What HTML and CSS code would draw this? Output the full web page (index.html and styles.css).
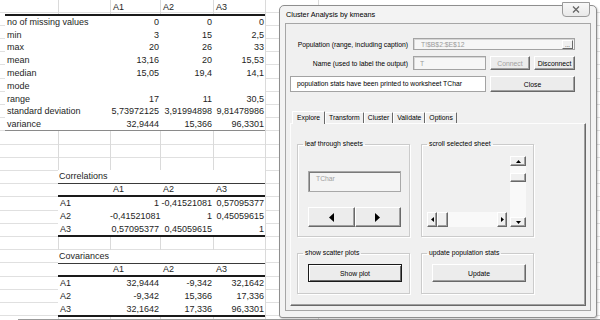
FILE: index.html
```html
<!DOCTYPE html>
<html lang="en">
<head>
    <meta charset="UTF-8">
    <meta name="viewport" content="width=device-width, initial-scale=1.0">
    <title>Cluster Analysis by kmeans</title>
    <link rel="stylesheet" href="styles.css">
</head>
<body>
    <div class="sheet">
        <table class="stats">
            <colgroup>
                <col style="width: 105px">
                <col style="width: 50px">
                <col style="width: 53px">
                <col style="width: 52px">
            </colgroup>
            <thead>
                <tr><th></th><th>A1</th><th>A2</th><th>A3</th></tr>
            </thead>
            <tbody>
                <tr><th>no of missing values</th><td>0</td><td>0</td><td>0</td></tr>
                <tr><th>min</th><td>3</td><td>15</td><td>2,5</td></tr>
                <tr><th>max</th><td>20</td><td>26</td><td>33</td></tr>
                <tr><th>mean</th><td>13,16</td><td>20</td><td>15,53</td></tr>
                <tr><th>median</th><td>15,05</td><td>19,4</td><td>14,1</td></tr>
                <tr><th>mode</th><td></td><td></td><td></td></tr>
                <tr><th>range</th><td>17</td><td>11</td><td>30,5</td></tr>
                <tr><th>standard deviation</th><td>5,73972125</td><td>3,91994898</td><td>9,81478986</td></tr>
                <tr><th>variance</th><td>32,9444</td><td>15,366</td><td>96,3301</td></tr>
            </tbody>
        </table>

        <div class="matrix-block first">
            <div class="matrix-title">Correlations</div>
            <table class="matrix">
                <colgroup>
                    <col style="width: 52px">
                    <col style="width: 50px">
                    <col style="width: 53px">
                    <col style="width: 52px">
                </colgroup>
                <thead>
                    <tr><th></th><th>A1</th><th>A2</th><th>A3</th></tr>
                </thead>
                <tbody>
                    <tr><th>A1</th><td>1</td><td>-0,41521081</td><td>0,57095377</td></tr>
                    <tr><th>A2</th><td>-0,41521081</td><td>1</td><td>0,45059615</td></tr>
                    <tr><th>A3</th><td>0,57095377</td><td>0,45059615</td><td>1</td></tr>
                </tbody>
            </table>
        </div>

        <div class="matrix-block">
            <div class="matrix-title">Covariances</div>
            <table class="matrix">
                <colgroup>
                    <col style="width: 52px">
                    <col style="width: 50px">
                    <col style="width: 53px">
                    <col style="width: 52px">
                </colgroup>
                <thead>
                    <tr><th></th><th>A1</th><th>A2</th><th>A3</th></tr>
                </thead>
                <tbody>
                    <tr><th>A1</th><td>32,9444</td><td>-9,342</td><td>32,1642</td></tr>
                    <tr><th>A2</th><td>-9,342</td><td>15,366</td><td>17,336</td></tr>
                    <tr><th>A3</th><td>32,1642</td><td>17,336</td><td>96,3301</td></tr>
                </tbody>
            </table>
        </div>
        <div class="sheet-edge"></div>

        <div class="dialog">
            <div class="titlebar">
                <span class="title">Cluster Analysis by kmeans</span>
                <button class="close-x" title="Close">
                    <svg width="8" height="7" viewBox="0 0 8 7"><path d="M1 0.5 L7 6.5 M7 0.5 L1 6.5" stroke="#666" stroke-width="1.3" fill="none"/></svg>
                </button>
            </div>
            <div class="client">
                <div class="form">
                    <label class="lbl" for="population">Population (range, including caption)</label>
                    <div class="range">
                        <input type="text" id="population" value="T!$B$2:$E$12" disabled>
                        <button class="browse">...</button>
                    </div>

                    <label class="lbl" for="outName">Name (used to label the output)</label>
                    <input type="text" id="outName" class="field" value="T" disabled>
                    <button class="btn" disabled>Connect</button>
                    <button class="btn">Disconnect</button>

                    <div class="status">population stats have been printed to worksheet TChar</div>
                    <button class="btn close">Close</button>
                </div>

                <div class="tabs">
                    <div class="tab active">Explore</div>
                    <div class="tab">Transform</div>
                    <div class="tab">Cluster</div>
                    <div class="tab">Validate</div>
                    <div class="tab">Options</div>
                </div>
                <div class="tab-pane">
                    <fieldset class="group">
                        <legend>leaf through sheets</legend>
                        <div class="sheet-name">TChar</div>
                        <div class="nav">
                            <button class="btn">
                                <svg width="5" height="9" viewBox="0 0 5 9"><polygon points="5,0 0,4.5 5,9" fill="#000"/></svg>
                            </button>
                            <button class="btn">
                                <svg width="5" height="9" viewBox="0 0 5 9"><polygon points="0,0 5,4.5 0,9" fill="#000"/></svg>
                            </button>
                        </div>
                    </fieldset>

                    <fieldset class="group">
                        <legend>scroll selected sheet</legend>
                        <div class="scroller">
                            <div class="vbar">
                                <div class="sb-btn">
                                    <svg width="5" height="3" viewBox="0 0 5 3"><polygon points="0,3 2.5,0 5,3" fill="#000"/></svg>
                                </div>
                                <div class="sb-track"><div class="sb-thumb"></div></div>
                                <div class="sb-btn">
                                    <svg width="5" height="3" viewBox="0 0 5 3"><polygon points="0,0 2.5,3 5,0" fill="#000"/></svg>
                                </div>
                            </div>
                            <div class="hbar">
                                <div class="sb-btn">
                                    <svg width="3" height="5" viewBox="0 0 3 5"><polygon points="3,0 0,2.5 3,5" fill="#000"/></svg>
                                </div>
                                <div class="sb-track"><div class="sb-thumb"></div></div>
                                <div class="sb-btn">
                                    <svg width="3" height="5" viewBox="0 0 3 5"><polygon points="0,0 3,2.5 0,5" fill="#000"/></svg>
                                </div>
                            </div>
                        </div>
                    </fieldset>

                    <fieldset class="group">
                        <legend>show scatter plots</legend>
                        <button class="btn wide default">Show plot</button>
                    </fieldset>

                    <fieldset class="group">
                        <legend>update population stats</legend>
                        <button class="btn wide">Update</button>
                    </fieldset>
                </div>
            </div>
        </div>
    </div>
</body>
</html>
```

FILE: styles.css
```css
* {
    box-sizing: border-box;
}
body {
    margin: 0;
    width: 600px;
    height: 320px;
    overflow: hidden;
    background: #fff;
    font-family: "Liberation Sans", Arial, sans-serif;
}

/* worksheet */
.sheet {
    position: relative;
    width: 600px;
    height: 320px;
    font-size: 9px;
    color: #1e1e1e;
    background-color: #fff;
    background-image:
        linear-gradient(#dadada, #dadada),
        linear-gradient(#dadada, #dadada),
        linear-gradient(#dadada, #dadada),
        linear-gradient(#dadada, #dadada),
        linear-gradient(#dadada, #dadada),
        linear-gradient(#dadada, #dadada),
        repeating-linear-gradient(to bottom, transparent 0, transparent 12.2px, #e0e0e0 12.2px, #e0e0e0 13.2px);
    background-size: 1px 100%, 1px 100%, 1px 100%, 1px 100%, 1px 100%, 1px 100%, 100% 100%;
    background-position: 58px 0, 110px 0, 160px 0, 213px 0, 265px 0, 318px 0, 0 -0.6px;
    background-repeat: no-repeat;
}
table {
    border-collapse: separate;
    border-spacing: 0;
    table-layout: fixed;
}
th, td {
    padding: 0;
    height: 12.8px;
    line-height: 11px;
    white-space: nowrap;
    font-weight: normal;
    background: #fff;
}
th {
    text-align: left;
    padding-left: 2px;
}
td {
    text-align: right;
    padding-right: 1px;
}
thead th {
    padding-left: 3px;
}
.stats {
    margin-left: 5px;
    width: 260px;
}
.stats thead th {
    height: 16px;
    background: transparent;
    border-bottom: 2px solid #1a1a1a;
}
.stats tbody tr:last-child th,
.stats tbody tr:last-child td {
    border-bottom: 1px solid #8a8a8a;
}
.matrix-block {
    margin: 13px 0 0 58px;
    width: 207px;
}
.matrix-block.first {
    margin-top: 39px;
}
.matrix-title {
    height: 14px;
    line-height: 12px;
    padding-left: 1px;
    background: #fff;
    border-bottom: 1px solid #3a3a3a;
}
.matrix {
    width: 207px;
}
.matrix thead th {
    height: 13px;
    border-bottom: 2px solid #1a1a1a;
}
.matrix tbody th,
.matrix tbody td {
    height: 13px;
}
.matrix tbody tr:last-child th,
.matrix tbody tr:last-child td {
    height: 14px;
    border-bottom: 2px solid #1a1a1a;
}
.sheet-edge {
    margin: 2px 0 0 18px;
    border-top: 1px solid #9a9a9a;
}

/* dialog window */
.dialog {
    position: absolute;
    left: 279px;
    top: 5px;
    width: 318px;
    height: 313px;
    display: flex;
    flex-direction: column;
    padding: 0 5px 6px;
    background: #f3f3f3;
    border: 1px solid #8e8e8e;
    border-radius: 5px 5px 3px 3px;
    box-shadow: 1px 1px 2px rgba(0, 0, 0, 0.2);
    font-size: 6.8px;
    color: #000;
}
.titlebar {
    display: flex;
    align-items: flex-start;
    height: 17px;
}
.title {
    font-size: 7.3px;
    margin: 4px 0 0 1px;
}
.close-x {
    margin: -4px 1px 0 auto;
    width: 28px;
    height: 15px;
    padding: 0;
    display: flex;
    align-items: center;
    justify-content: center;
    background: linear-gradient(#f8f8f8, #e9e9e9);
    border: 1px solid #9a9a9a;
    border-radius: 0 0 4px 4px;
}
.client {
    flex: 1;
    background: #f0f0f0;
    border: 1px solid #a6a6a6;
    padding: 14px 4px 0;
}
.form {
    display: grid;
    grid-template-columns: 119px 73px 40px 41px;
    grid-template-rows: 12px 14px 16px;
    column-gap: 4px;
    row-gap: 6px;
}
.lbl {
    text-align: right;
    padding-right: 1px;
    align-self: center;
}
input {
    font: inherit;
    color: #9a9a9a;
    margin: 0;
    padding: 0 6px;
    background: #f6f6f6;
}
.field {
    border: 1px solid #a3a3a3;
    box-shadow: inset 1px 1px #d6d6d6;
    width: 100%;
}
.range {
    grid-column: 2 / span 3;
    display: flex;
    align-items: center;
    border: 1px solid #a3a3a3;
    box-shadow: inset 1px 1px #d6d6d6;
    background: #f6f6f6;
}
.range input {
    flex: 1;
    min-width: 0;
    height: 100%;
    border: none;
    background: transparent;
    padding-left: 7px;
}
.browse {
    width: 11px;
    height: 9px;
    margin-right: 1px;
    padding: 0;
    font: inherit;
    font-size: 6px;
    line-height: 9px;
    background: #f0f0f0;
    border: 1px solid;
    border-color: #fff #696969 #696969 #fff;
}
.btn {
    font: inherit;
    color: #000;
    padding: 0;
    background: #ececec;
    border: 1px solid;
    border-color: #fff #696969 #696969 #fff;
    box-shadow: inset -1px -1px #a0a0a0;
}
.btn:disabled {
    color: #a0a0a0;
}
.status {
    grid-column: 1 / span 2;
    background: #fff;
    border: 1px solid #a3a3a3;
    padding-left: 6px;
    line-height: 13px;
}
.close {
    grid-column: 3 / span 2;
}

/* tabs */
.tabs {
    position: relative;
    z-index: 1;
    display: flex;
    align-items: flex-end;
    height: 13px;
    margin-top: 18px;
    padding-left: 2px;
}
.tab {
    height: 11px;
    padding: 0 3px;
    line-height: 9px;
    border: 1px solid;
    border-color: #fff #696969 transparent #fff;
    border-bottom: none;
    border-radius: 1px 1px 0 0;
}
.tab.active {
    height: 13px;
    margin-bottom: -1px;
    padding: 0 4px;
    line-height: 11px;
    background: #f0f0f0;
}
.tab-pane {
    height: 183px;
    border: 1px solid;
    border-color: #fdfdfd #696969 #696969 #fdfdfd;
    box-shadow: inset -1px -1px #a0a0a0;
    padding: 16px 0 0 6px;
    display: grid;
    grid-template-columns: 113px 113px;
    grid-template-rows: 97px 45px;
    column-gap: 11px;
    row-gap: 12px;
}
.group {
    margin: 0;
    padding: 0;
    min-width: 0;
    border: 1px solid #cbcbcb;
    box-shadow: inset 1px 1px #fff, 1px 1px #fff;
}
.group legend {
    margin-left: 5px;
    padding: 0 2px;
    line-height: 8px;
}
.sheet-name {
    margin: 23px 0 0 10px;
    width: 93px;
    height: 21px;
    padding: 3px 7px;
    color: #a0a0a0;
    background: #f4f4f4;
    border: 1px solid #a8a8a8;
    box-shadow: inset 1px 1px #7a7a7a;
}
.nav {
    display: flex;
    margin: 15px 0 0 10px;
    width: 93px;
    height: 20px;
}
.nav .btn {
    flex: 1;
    display: flex;
    align-items: center;
    justify-content: center;
}
.scroller {
    display: grid;
    grid-template-columns: 80px 16px;
    grid-template-rows: 1fr 15px;
    column-gap: 3px;
    height: 71px;
    margin: 8px 0 0 5px;
}
.vbar {
    grid-column: 2;
    grid-row: 1 / span 2;
    display: flex;
    flex-direction: column;
}
.hbar {
    grid-column: 1;
    grid-row: 2;
    display: flex;
}
.sb-btn {
    flex: 0 0 10px;
    display: flex;
    align-items: center;
    justify-content: center;
    background: #f0f0f0;
    border: 1px solid;
    border-color: #fff #696969 #696969 #fff;
    box-shadow: inset -1px -1px #a0a0a0;
}
.sb-track {
    flex: 1;
    display: flex;
    background: #f9f9f9;
}
.vbar .sb-track {
    flex-direction: column;
    padding-top: 7px;
}
.vbar .sb-thumb {
    height: 9px;
}
.hbar .sb-thumb {
    width: 11px;
}
.sb-thumb {
    background: #f0f0f0;
    border: 1px solid;
    border-color: #fff #696969 #696969 #fff;
    box-shadow: inset -1px -1px #a0a0a0;
}
.btn.wide {
    display: block;
    width: 94px;
    height: 18px;
    margin: 7px 0 0 10px;
}
.btn.default {
    border: 1px solid #1a1a1a;
    box-shadow: inset 1px 1px #fff, inset -1px -1px #696969;
}
```
